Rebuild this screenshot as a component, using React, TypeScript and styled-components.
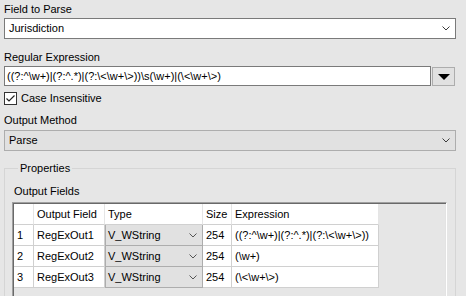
import React from "react";
import styled, { createGlobalStyle } from "styled-components";

const Global = createGlobalStyle`
  html, body { margin: 0; padding: 0; background: #e6e6e6; }
  body {
    font-family: "Liberation Sans", Arial, sans-serif;
    font-size: 11px;
    color: #000;
  }
`;

const Panel = styled.div`
  width: 466px;
  height: 296px;
  overflow: hidden;
  box-sizing: border-box;
  padding: 3px 10px 0 4px;
  display: flex;
  flex-direction: column;
  background: #e6e6e6;
  & > * { flex-shrink: 0; }
`;

const Label = styled.div<{ $mt?: number; $ml?: number }>`
  height: 13px;
  line-height: 13px;
  margin-top: ${(p) => p.$mt ?? 0}px;
  margin-left: ${(p) => p.$ml ?? 0}px;
  white-space: nowrap;
`;

const Combo = styled.div<{ $mt: number; $readonly?: boolean }>`
  margin-top: ${(p) => p.$mt}px;
  height: 21px;
  box-sizing: border-box;
  border: 1px solid ${(p) => (p.$readonly ? "#adadad" : "#7a7a7a")};
  background: ${(p) => (p.$readonly ? "#e1e1e1" : "#ffffff")};
  display: flex;
  align-items: center;
  justify-content: space-between;
  padding: 0 5px 0 4px;
  line-height: 13px;
`;

const Chevron = ({ color = "#3c3c3c" }: { color?: string }) => (
  <svg width="8" height="5" viewBox="0 0 8 5" style={{ display: "block" }}>
    <path d="M0.5 0.5 L4 4 L7.5 0.5" fill="none" stroke={color} strokeWidth="1" />
  </svg>
);

const RegexRow = styled.div`
  margin-top: 2px;
  display: flex;
  align-items: center;
  height: 20px;
`;

const RegexInput = styled.div`
  width: 427px;
  height: 20px;
  box-sizing: border-box;
  border: 1px solid #7a7a7a;
  background: #fff;
  padding: 0 2px;
  line-height: 18px;
  white-space: nowrap;
  overflow: hidden;
`;

const DropButton = styled.div`
  margin-left: 1px;
  width: 23px;
  height: 19px;
  box-sizing: border-box;
  border: 1px solid #adadad;
  background: #e1e1e1;
  display: flex;
  align-items: center;
  justify-content: center;
  margin-top: 1px;
`;

const CheckRow = styled.label`
  margin-top: 6px;
  height: 13px;
  display: flex;
  align-items: center;
  gap: 4px;
  line-height: 13px;
`;

const CheckBox = styled.span`
  width: 13px;
  height: 13px;
  box-sizing: border-box;
  border: 1px solid #333;
  background: #fff;
  display: flex;
  align-items: center;
  justify-content: center;
`;

const GroupBox = styled.div`
  margin-top: 17px;
  height: 200px;
  box-sizing: border-box;
  border: 1px solid #d5d5d5;
  padding: 0 7px 0 7px;
  display: flex;
  flex-direction: column;
  & > * { flex-shrink: 0; }
`;

const GroupTitle = styled.div`
  margin: -7px 0 0 6px;
  padding: 0 2px;
  height: 13px;
  line-height: 13px;
  width: fit-content;
  background: #e6e6e6;
`;

const GridFrame = styled.div`
  margin-top: 4px;
  width: 435px;
  height: 120px;
  box-sizing: border-box;
  border-top: 1px solid #a0a0a0;
  border-left: 1px solid #a0a0a0;
  border-right: 1px solid #ffffff;
  border-bottom: 1px solid #ffffff;
  box-shadow: inset 1px 1px 0 #696969, inset -1px -1px 0 #e3e3e3;
  padding: 1px;
  background: #e6e6e6;
`;

const Table = styled.div`
  display: grid;
  grid-template-columns: 20px 71px 98px 29px 147px;
  grid-auto-rows: 21px;
  width: 365px;
`;

const Cell = styled.div<{ $header?: boolean }>`
  box-sizing: border-box;
  background: #fff;
  border-right: 1px solid ${(p) => (p.$header ? "#e5e5e5" : "#d0d0d0")};
  border-bottom: 1px solid #d0d0d0;
  padding-left: 3px;
  display: flex;
  align-items: center;
  white-space: nowrap;
  overflow: hidden;
  line-height: 13px;
`;

const TypeCell = styled.div`
  box-sizing: border-box;
  background: #e1e1e1;
  border: 1px solid #adadad;
  border-top: none;
  padding: 0 5px 0 2px;
  display: flex;
  align-items: center;
  justify-content: space-between;
  line-height: 13px;
`;

const rows = [
  { n: "1", name: "RegExOut1", type: "V_WString", size: "254", expr: "((?:^\\w+)|(?:^.*)|(?:\\<\\w+\\>))" },
  { n: "2", name: "RegExOut2", type: "V_WString", size: "254", expr: "(\\w+)" },
  { n: "3", name: "RegExOut3", type: "V_WString", size: "254", expr: "(\\<\\w+\\>)" },
];

export default function App() {
  return (
    <>
      <Global />
      <Panel>
        <Label>Field to Parse</Label>
        <Combo $mt={2}>
          <span>Jurisdiction</span>
          <Chevron />
        </Combo>

        <Label $mt={12}>Regular Expression</Label>
        <RegexRow>
          <RegexInput>{"((?:^\\w+)|(?:^.*)|(?:\\<\\w+\\>))\\s(\\w+)|(\\<\\w+\\>)"}</RegexInput>
          <DropButton>
            <svg width="12" height="6" viewBox="0 0 12 6" style={{ display: "block" }}>
              <polygon points="0,0 12,0 6,6" fill="#000" />
            </svg>
          </DropButton>
        </RegexRow>

        <CheckRow>
          <CheckBox>
            <svg width="11" height="11" viewBox="0 0 11 11" style={{ display: "block" }}>
              <path d="M1.5 5.5 L4 8 L9.5 2.5" fill="none" stroke="#222" strokeWidth="1.2" />
            </svg>
          </CheckBox>
          <span>Case Insensitive</span>
        </CheckRow>

        <Label $mt={9}>Output Method</Label>
        <Combo $mt={3} $readonly>
          <span>Parse</span>
          <Chevron />
        </Combo>

        <GroupBox>
          <GroupTitle>Properties</GroupTitle>
          <Label $mt={10} $ml={2}>Output Fields</Label>
          <GridFrame>
            <Table>
              <Cell $header />
              <Cell $header>Output Field</Cell>
              <Cell $header>Type</Cell>
              <Cell $header>Size</Cell>
              <Cell $header>Expression</Cell>
              {rows.map((r) => (
                <React.Fragment key={r.n}>
                  <Cell>{r.n}</Cell>
                  <Cell>{r.name}</Cell>
                  <TypeCell>
                    <span>{r.type}</span>
                    <Chevron color="#555" />
                  </TypeCell>
                  <Cell>{r.size}</Cell>
                  <Cell>{r.expr}</Cell>
                </React.Fragment>
              ))}
            </Table>
          </GridFrame>
        </GroupBox>
      </Panel>
    </>
  );
}
